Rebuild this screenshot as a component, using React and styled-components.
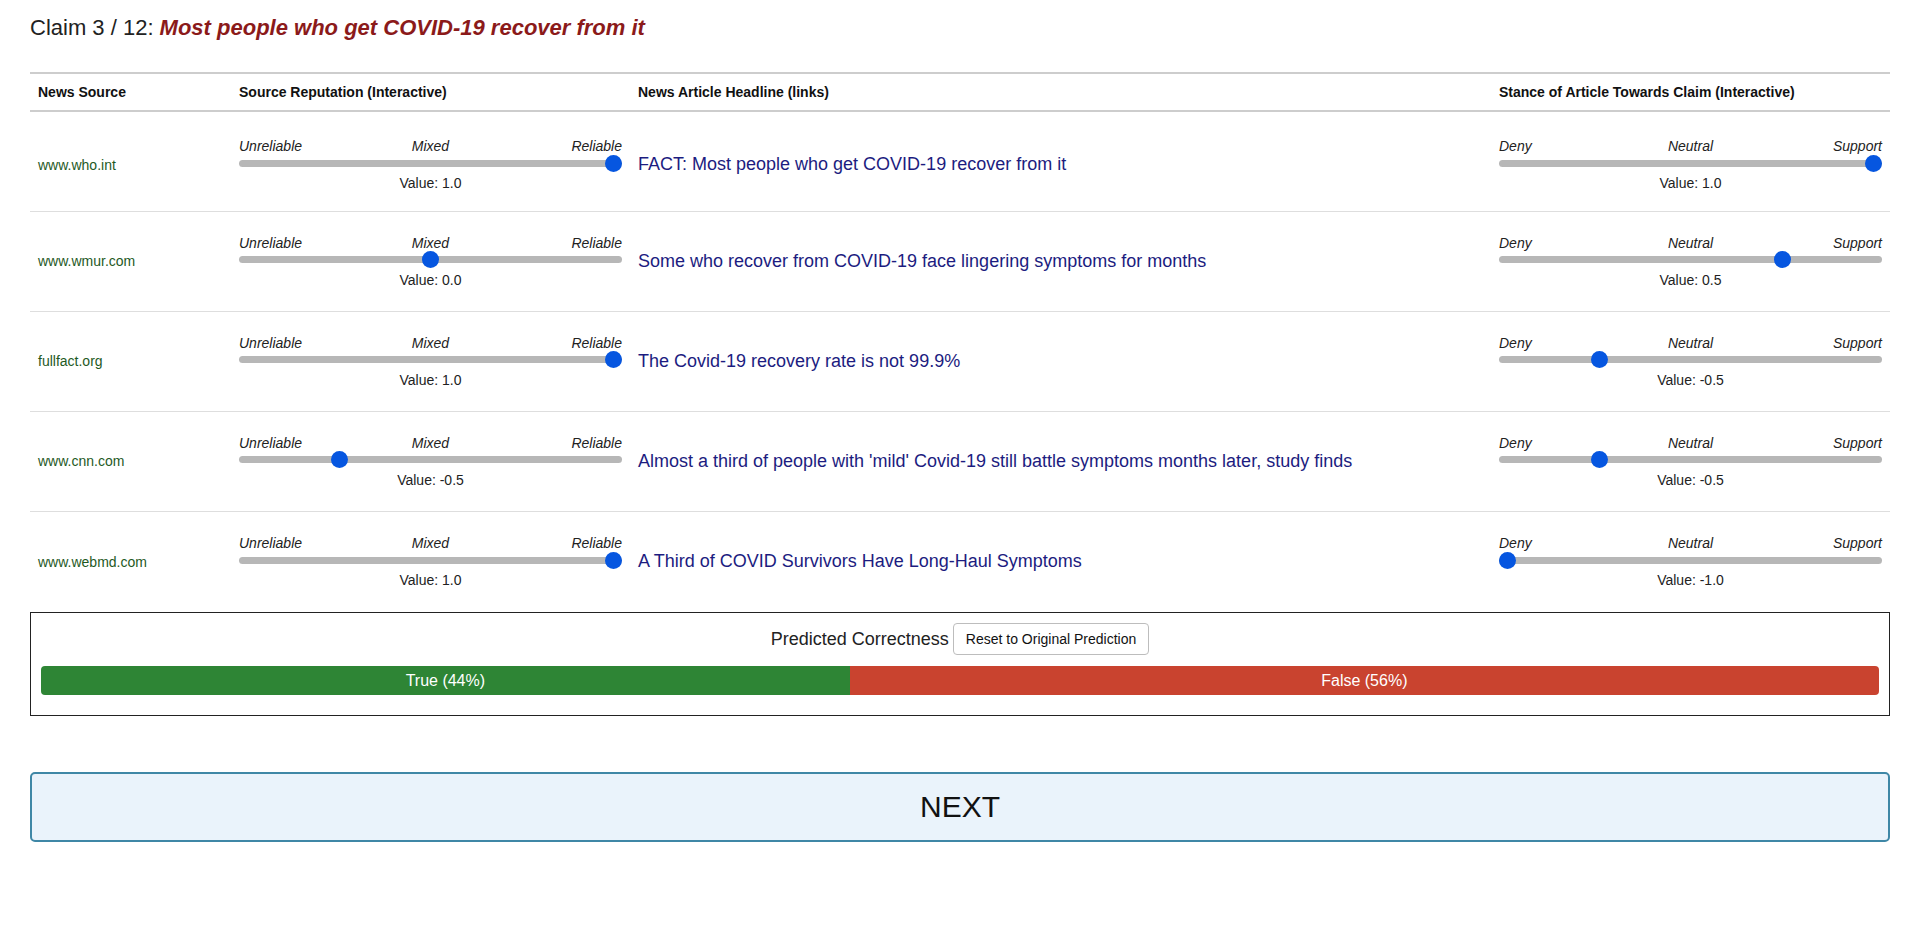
import { useState } from "react";
import styled, { createGlobalStyle } from "styled-components";

const GlobalStyle = createGlobalStyle`
  body {
    margin: 0;
    background: #fff;
    font-family: "Liberation Sans", Arial, sans-serif;
    color: #222;
  }
`;

const Page = styled.div`
  padding: 15px 30px 16px;
`;

const Title = styled.h2`
  margin: 0 0 31px;
  font-size: 22px;
  font-weight: normal;
  line-height: normal;
  color: #222;
  & em {
    color: #8b1a1a;
    font-weight: bold;
  }
`;

const COLS = "201px 399px 1fr 399px";

const HeadRow = styled.div`
  display: grid;
  grid-template-columns: ${COLS};
  border-top: 2px solid #cdcdcd;
  border-bottom: 2px solid #cdcdcd;
`;

const HeadCell = styled.div`
  padding: 10px 8px;
  font-size: 14px;
  line-height: 16px;
  font-weight: bold;
  color: #111;
`;

// first row sits a bit lower under the thick header rule
const Row = styled.div`
  display: grid;
  grid-template-columns: ${COLS};
  align-items: center;
  box-sizing: border-box;
  height: 100px;
  padding: ${(p) => (p.$first ? "6px 0 0" : "0 0 1px")};
  border-bottom: ${(p) => (p.$last ? "none" : "1px solid #dedede")};
`;

const Cell = styled.div`
  padding: 0 8px;
`;

const Source = styled(Cell)`
  font-size: 14px;
  color: #1f5a1f;
`;

const Headline = styled.a`
  display: block;
  padding: 0 8px;
  font-size: 18px;
  line-height: normal;
  color: #1c1c80;
  text-decoration: none;
`;

const SliderWrap = styled(Cell)`
  display: flex;
  flex-direction: column;
`;

const Ticks = styled.div`
  display: grid;
  grid-template-columns: 1fr auto 1fr;
  font-size: 14px;
  line-height: 16px;
  font-style: italic;
  color: #222;
  & span:nth-child(2) {
    justify-self: center;
  }
  & span:nth-child(3) {
    justify-self: end;
  }
`;

const Range = styled.input`
  -webkit-appearance: none;
  appearance: none;
  display: block;
  width: 100%;
  height: 18px;
  margin: 0;
  background: transparent;
  cursor: pointer;
  &::-webkit-slider-runnable-track {
    height: 7px;
    border-radius: 4px;
    background: #b7b7b7;
  }
  &::-webkit-slider-thumb {
    -webkit-appearance: none;
    width: 17px;
    height: 17px;
    margin-top: -5px;
    border: none;
    border-radius: 50%;
    background: #0656e0;
  }
  &:focus {
    outline: none;
  }
`;

const Value = styled.div`
  margin-top: 3px;
  text-align: center;
  font-size: 14px;
  line-height: 16px;
  color: #222;
`;

const Prediction = styled.div`
  border: 1px solid #222;
  padding: 10px 10px 20px;
`;

const PredictHead = styled.div`
  display: flex;
  justify-content: center;
  align-items: center;
  gap: 4px;
  font-size: 18px;
  color: #222;
`;

const ResetButton = styled.button`
  height: 32px;
  padding: 0 12px;
  border: 1px solid #bdbdbd;
  border-radius: 4px;
  background: #fff;
  font-family: inherit;
  font-size: 14px;
  color: #111;
  cursor: pointer;
`;

const Bar = styled.div`
  display: flex;
  height: 29px;
  margin-top: 11px;
  border-radius: 4px;
  overflow: hidden;
`;

const Segment = styled.div`
  display: flex;
  align-items: center;
  justify-content: center;
  background: ${(p) => (p.$true ? "#2e8535" : "#c9432f")};
  color: #fff;
  font-size: 16px;
`;

const NextButton = styled.button`
  display: block;
  width: 100%;
  height: 70px;
  margin-top: 56px;
  border: 2px solid #3f87a6;
  border-radius: 5px;
  background: #eaf3fb;
  font-family: inherit;
  font-size: 30px;
  color: #111;
  cursor: pointer;
`;

const articles = [
  {
    source: "www.who.int",
    rep: 1,
    headline: "FACT: Most people who get COVID-19 recover from it",
    stance: 1,
  },
  {
    source: "www.wmur.com",
    rep: 0,
    headline: "Some who recover from COVID-19 face lingering symptoms for months",
    stance: 0.5,
  },
  {
    source: "fullfact.org",
    rep: 1,
    headline: "The Covid-19 recovery rate is not 99.9%",
    stance: -0.5,
  },
  {
    source: "www.cnn.com",
    rep: -0.5,
    headline:
      "Almost a third of people with 'mild' Covid-19 still battle symptoms months later, study finds",
    stance: -0.5,
  },
  {
    source: "www.webmd.com",
    rep: 1,
    headline: "A Third of COVID Survivors Have Long-Haul Symptoms",
    stance: -1,
  },
];

function Slider({ labels, value, onChange }) {
  return (
    <SliderWrap>
      <Ticks>
        {labels.map((l) => (
          <span key={l}>{l}</span>
        ))}
      </Ticks>
      <Range
        type="range"
        min={-1}
        max={1}
        step={0.1}
        value={value}
        onChange={(e) => onChange(parseFloat(e.target.value))}
      />
      <Value>Value: {value.toFixed(1)}</Value>
    </SliderWrap>
  );
}

export default function App() {
  const [rows, setRows] = useState(articles);

  const update = (i, key, v) =>
    setRows((prev) => prev.map((r, j) => (j === i ? { ...r, [key]: v } : r)));

  return (
    <Page>
      <GlobalStyle />
      <Title>
        Claim 3 / 12: <em>Most people who get COVID-19 recover from it</em>
      </Title>

      <HeadRow>
        <HeadCell>News Source</HeadCell>
        <HeadCell>Source Reputation (Interactive)</HeadCell>
        <HeadCell>News Article Headline (links)</HeadCell>
        <HeadCell>Stance of Article Towards Claim (Interactive)</HeadCell>
      </HeadRow>

      {rows.map((r, i) => (
        <Row
          key={r.source}
          $first={i === 0}
          $last={i === rows.length - 1}
        >
          <Source>{r.source}</Source>
          <Slider
            labels={["Unreliable", "Mixed", "Reliable"]}
            value={r.rep}
            onChange={(v) => update(i, "rep", v)}
          />
          <Headline href="#">{r.headline}</Headline>
          <Slider
            labels={["Deny", "Neutral", "Support"]}
            value={r.stance}
            onChange={(v) => update(i, "stance", v)}
          />
        </Row>
      ))}

      <Prediction>
        <PredictHead>
          Predicted Correctness
          <ResetButton onClick={() => setRows(articles)}>
            Reset to Original Prediction
          </ResetButton>
        </PredictHead>
        <Bar>
          <Segment $true style={{ width: "44%" }}>
            True (44%)
          </Segment>
          <Segment style={{ width: "56%" }}>False (56%)</Segment>
        </Bar>
      </Prediction>

      <NextButton>NEXT</NextButton>
    </Page>
  );
}
